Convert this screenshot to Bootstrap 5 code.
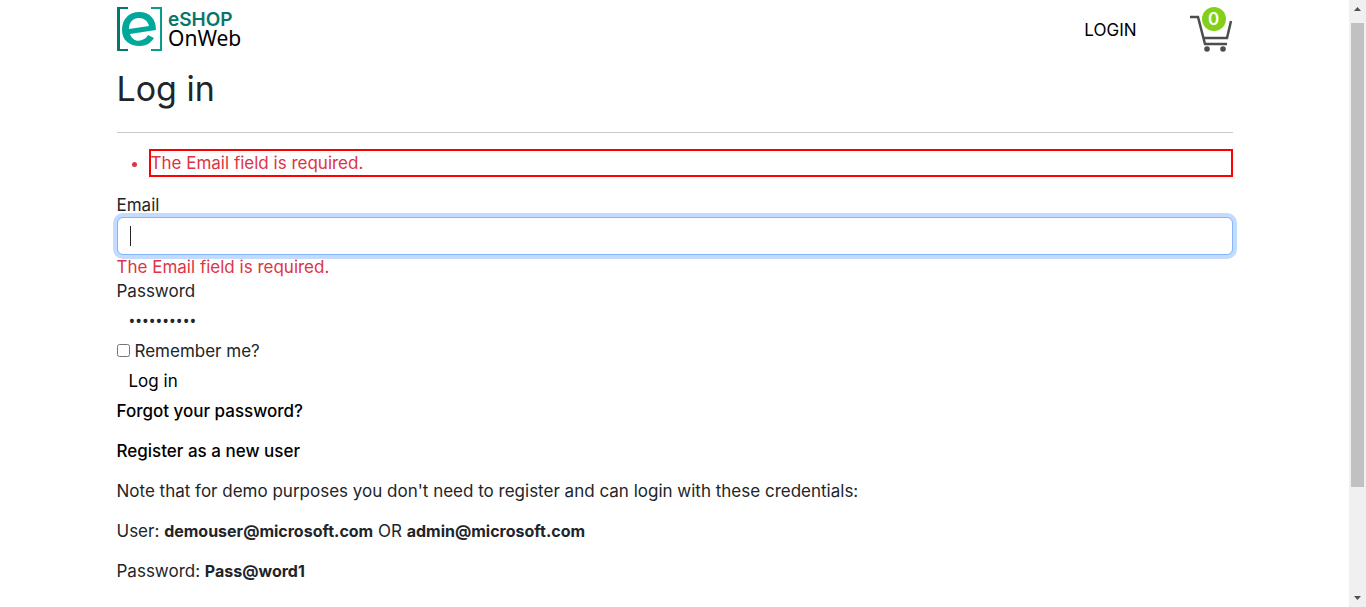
<!DOCTYPE html>
<html lang="en">
<head>
<meta charset="utf-8">
<meta name="viewport" content="width=device-width, initial-scale=1">
<title>Log in - eShopOnWeb</title>
<link href="https://cdn.jsdelivr.net/npm/bootstrap@5.3.0/dist/css/bootstrap.min.css" rel="stylesheet">
<style>
body { font-family: Inter, "Open Sans", sans-serif; font-size: 17px; line-height: 24px; color: #212529; }
.page-view { min-width: 0; }
.shop-header { height: 58px; padding-top: 7px; }
.login-link { font-size: 17px; margin-right: 53px; padding-top: 11px; }
.basket { width: 43px; height: 46px; }
.basket-count { width: 24px; height: 24px; background: #83d01b; font-size: 17px; line-height: 24px; left: 12px; top: 0; }
.page-title { font-size: 34px; line-height: 40px; margin: 11px 0 23px; }
.rule { border-top: 1px solid #212529; opacity: .25; margin: 0 0 16px; }
.error-text { color: #dc3545; }
.error-list { padding-left: 32px; margin: 0 0 16px; }
.error-list li { border: 2px solid #f00; }
.email-box, .email-box:focus { height: 38px; border-color: #86b7fe; box-shadow: 0 0 0 4px #c2dbfe; caret-color: transparent; }
.caret { width: 1px; height: 20px; left: 13px; top: 9px; background: #212529; }
.password-box { height: 36px; font-family: "Open Sans", sans-serif; font-size: 18px; }
.tick { width: 13px; height: 13px; margin: 0 5px 2px 0; }
.submit-line { height: 36px; }
.plain-link { color: #000; font-weight: 500; }
.credential { font-size: 16px; font-weight: 700; }
.scroll-track { width: 17px; background: #f0f0f0; }
.scroll-thumb { width: 13px; height: 76.5vh; background: #c1c1c1; margin-top: 6px; }
</style>
</head>
<body>
<div class="d-flex vh-100 overflow-hidden">
  <div class="page-view flex-grow-1 overflow-hidden">
    <header class="shop-header container d-flex align-items-start justify-content-between">
      <a href="#" aria-label="eShopOnWeb home">
        <svg class="d-block" width="128" height="45" viewBox="0 0 128 45">
          <path d="M0 0H11V2H3V42H11V44H0Z" fill="#08766b"/>
          <path d="M34 0H45V44H34V42H43V2H34Z" fill="#0a9b8f"/>
          <path d="M5 23C5 12 12 5 22 5C33 5 39 12 39 23L13 27C15 33 20 35 25 33C28 32 30 30 31 28L37 31C34 36 29 39 23 39C12 39 5 33 5 23ZM12 22L32 19C31 14 27 11 22 11C16 11 12 15 12 22Z" fill="#00a79b" fill-rule="evenodd"/>
          <text x="51" y="19" font-family="Inter, sans-serif" font-size="19" font-weight="600" fill="#08766b">eSHOP</text>
          <text x="51" y="39" font-family="Noto Sans, sans-serif" font-size="21" fill="#000">OnWeb</text>
        </svg>
      </a>
      <div class="d-flex align-items-start">
        <a class="login-link text-black text-decoration-none" href="#">LOGIN</a>
        <a class="basket position-relative d-block text-decoration-none" href="#" aria-label="Basket">
          <svg class="d-block" width="43" height="46" viewBox="0 0 43 46" fill="none" stroke="#4d4d4d" stroke-width="2.500">
            <path d="M0 10H8L15 37H37M13 31H37L41 14"/>
            <circle cx="17" cy="42" r="2.800" fill="#4d4d4d" stroke="none"/><circle cx="33" cy="42" r="2.800" fill="#4d4d4d" stroke="none"/>
          </svg>
          <span class="basket-count position-absolute rounded-circle text-white text-center fw-semibold">0</span>
        </a>
      </div>
    </header>
    <main class="container">
      <h1 class="page-title fw-normal">Log in</h1>
      <hr class="rule">
      <form onsubmit="return false">
        <ul class="error-list error-text"><li>The Email field is required.</li></ul>
        <label class="d-block" for="email">Email</label>
        <div class="position-relative">
          <input class="email-box form-control" id="email" type="email" autofocus>
          <span class="caret position-absolute"></span>
        </div>
        <div class="error-text">The Email field is required.</div>
        <label class="d-block" for="password">Password</label>
        <input class="password-box form-control border-0" id="password" type="password" value="Pass@word1">
        <div class="d-flex align-items-center"><input class="tick" id="remember" type="checkbox"><label for="remember">Remember me?</label></div>
        <div class="submit-line d-flex align-items-center"><button class="border-0 bg-transparent px-2 ms-1 py-0" type="submit">Log in</button></div>
        <p><a class="plain-link text-decoration-none" href="#">Forgot your password?</a></p>
        <p><a class="plain-link text-decoration-none" href="#">Register as a new user</a></p>
        <p>Note that for demo purposes you don't need to register and can login with these credentials:</p>
        <p>User: <b class="credential">demouser@microsoft.com</b> OR <b class="credential">admin@microsoft.com</b></p>
        <p>Password: <b class="credential">Pass@word1</b></p>
      </form>
    </main>
  </div>
  <div class="scroll-track d-flex flex-column align-items-center flex-shrink-0" aria-hidden="true">
    <svg class="d-block flex-shrink-0" width="17" height="17" viewBox="0 0 17 17"><path d="M5 11L8.500 7L12 11Z" fill="#505050"/></svg>
    <div class="scroll-thumb"></div>
    <svg class="d-block flex-shrink-0 mt-auto" width="17" height="17" viewBox="0 0 17 17"><path d="M5 6L8.500 10L12 6Z" fill="#505050"/></svg>
  </div>
</div>
<script src="https://cdn.jsdelivr.net/npm/bootstrap@5.3.0/dist/js/bootstrap.bundle.min.js"></script>
</body>
</html>
